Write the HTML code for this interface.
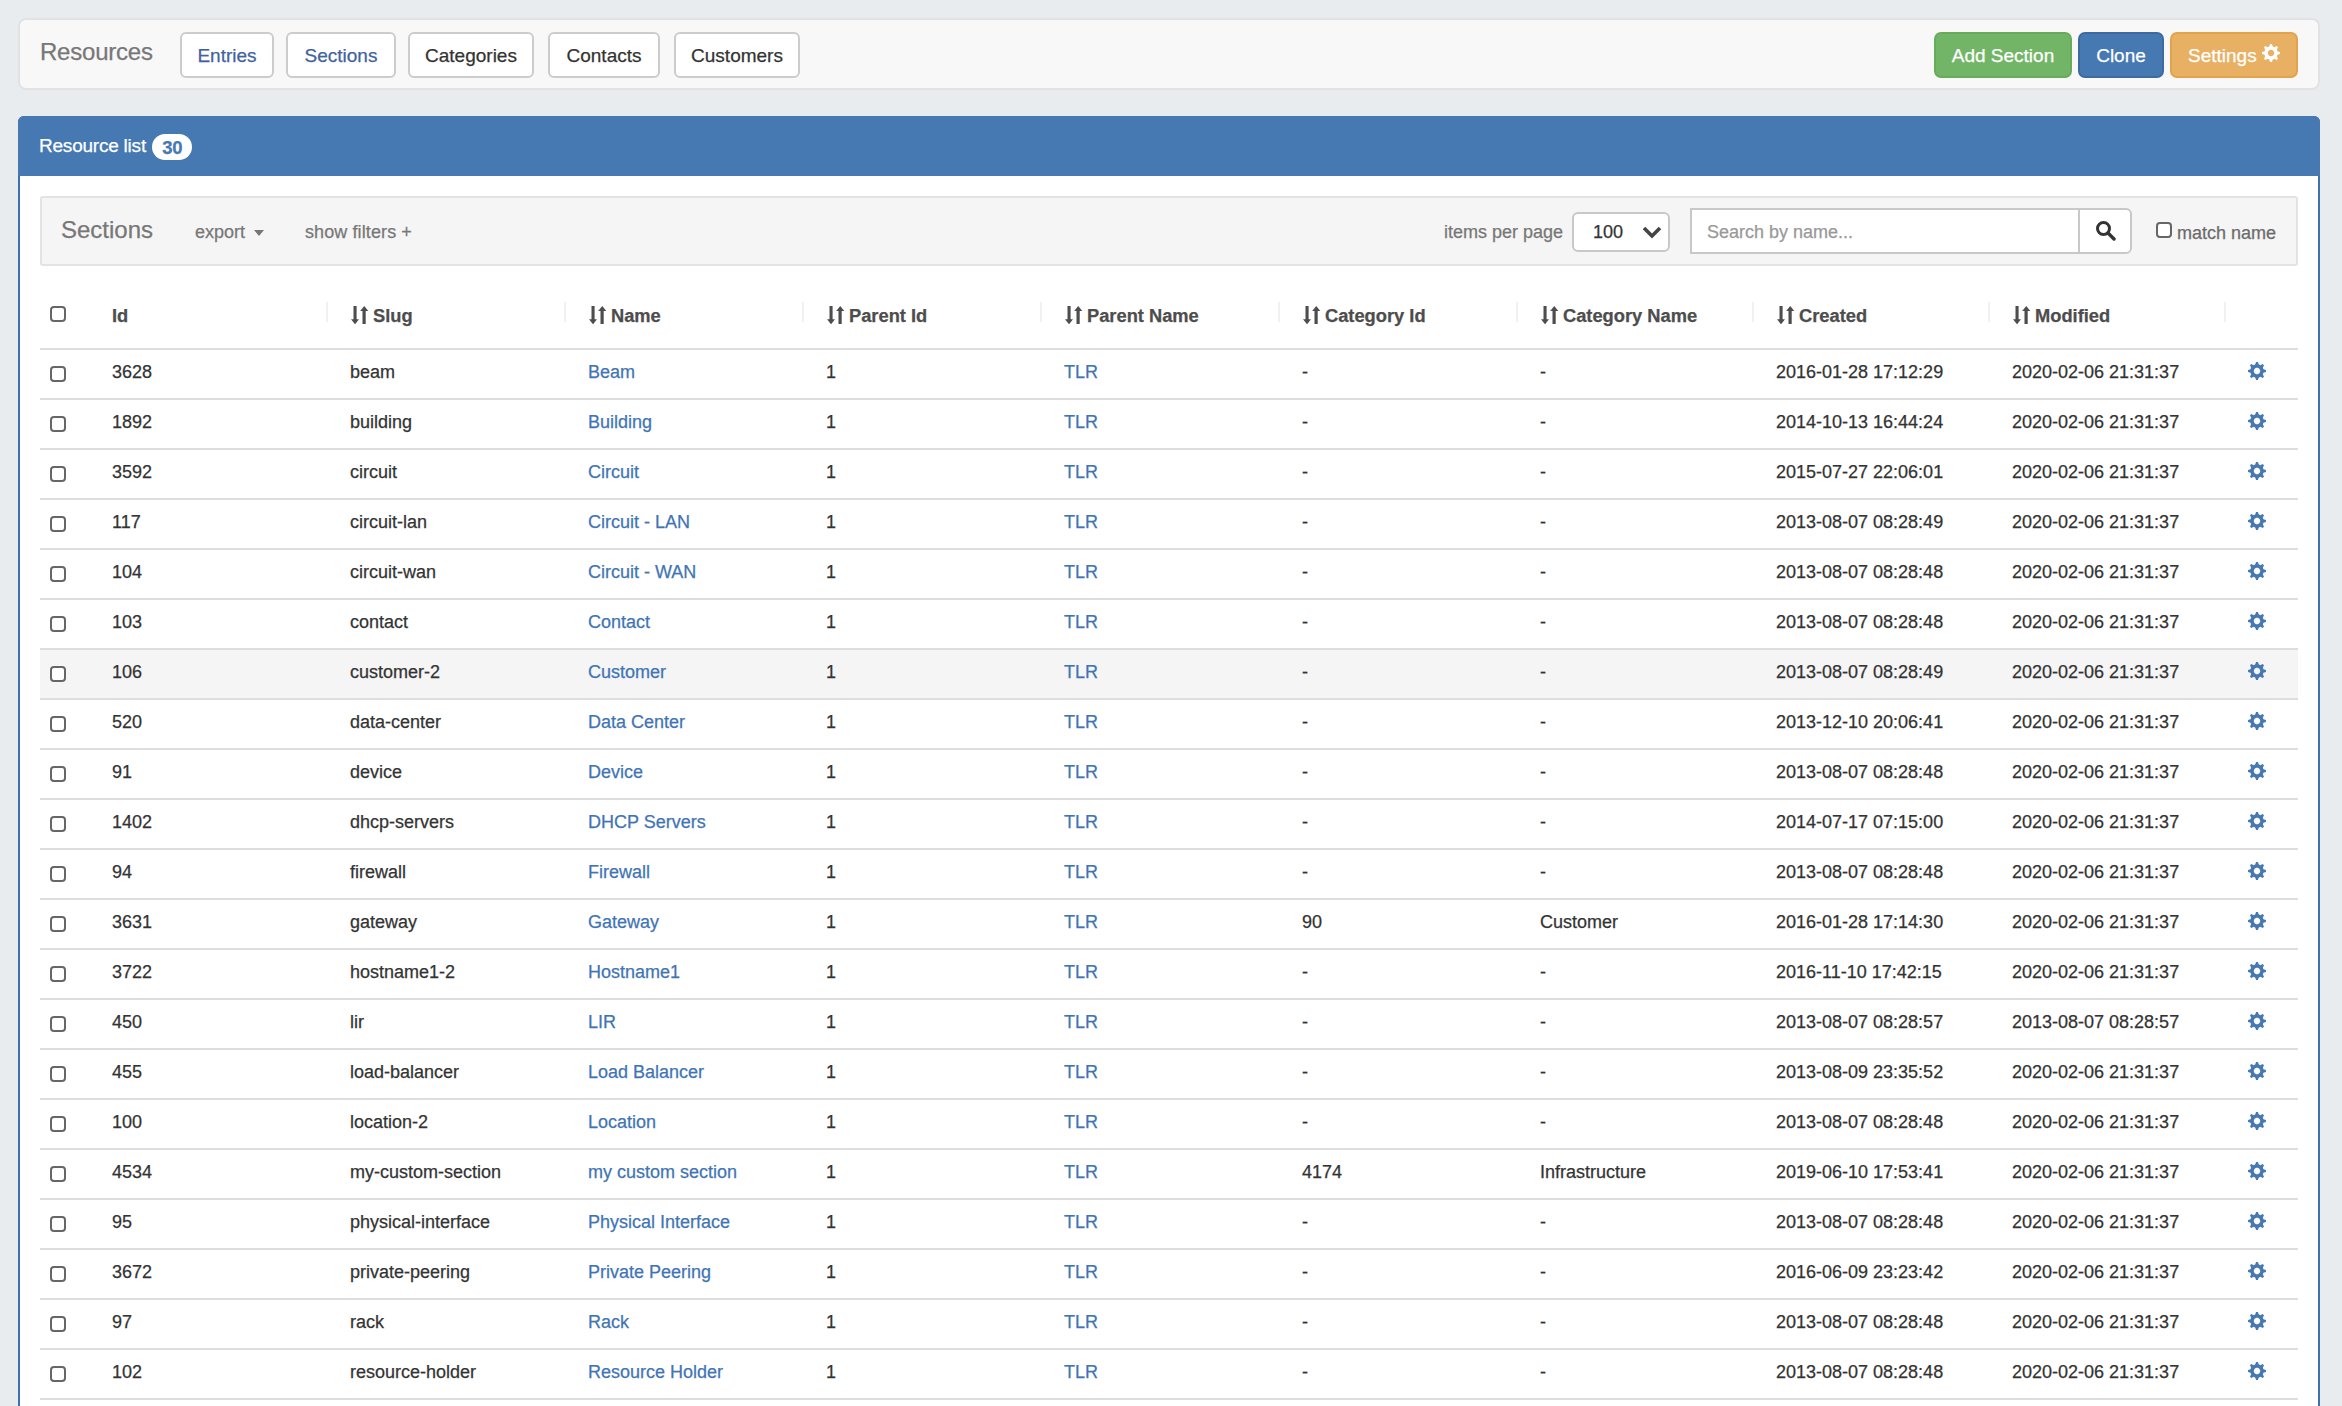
<!DOCTYPE html>
<html><head><meta charset="utf-8"><title>Resources</title>
<style>
*{box-sizing:border-box;margin:0;padding:0}
html,body{width:2342px;height:1406px;overflow:hidden;background:#e9ecef;font-family:"Liberation Sans",sans-serif;color:#333}
body div{-webkit-text-stroke:0.25px currentColor}
.abs{position:absolute}
#nav{position:absolute;left:18px;top:18px;width:2302px;height:72px;background:#f8f8f8;border:2px solid #e2e2e2;border-radius:8px}
.brand{position:absolute;left:40px;top:38px;font-size:24px;line-height:28px;color:#777;white-space:nowrap;letter-spacing:-0.22px}
.nb{position:absolute;top:32px;height:46px;background:#fff;border:2px solid #ccc;border-radius:6px;font-size:19px;line-height:44px;text-align:center;color:#333;white-space:nowrap}
.nb.blue{color:#3f62a0}
.btn{position:absolute;top:32px;height:46px;border:2px solid;border-radius:7px;font-size:19px;line-height:44px;text-align:center;color:#fff;white-space:nowrap}
#panel{position:absolute;left:18px;top:116px;width:2302px;height:1400px;border:2px solid #3d72b2;border-radius:6px;background:#fff}
#ph{position:absolute;left:18px;top:116px;width:2302px;height:60px;background:#4679b2;border-radius:6px 6px 0 0}
.ptitle{position:absolute;left:39px;top:132px;font-size:19px;line-height:28px;color:#fff;white-space:nowrap;letter-spacing:-0.22px}
.badge{position:absolute;left:152px;top:134px;width:40px;height:26px;border-radius:13px;background:#fff;color:#4679b2;font-weight:bold;font-size:18.5px;line-height:28px;text-align:center;letter-spacing:-0.3px;padding-left:0.5px}
#well{position:absolute;left:40px;top:196px;width:2258px;height:70px;background:#f5f5f5;border:2px solid #e3e3e3;border-radius:3px}
.wt{position:absolute;white-space:nowrap;color:#777}
.sel{position:absolute;left:1572px;top:212px;width:98px;height:40px;background:#fff;border:2px solid #c8c8c8;border-radius:6px}
.inp{position:absolute;left:1690px;top:208px;width:390px;height:46px;background:#fff;border:2px solid #c8c8c8;border-right:none}
.sbtn{position:absolute;left:2078px;top:208px;width:54px;height:46px;background:#fff;border:2px solid #c8c8c8;border-radius:0 6px 6px 0}
.cb{position:absolute;width:16px;height:16px;border:2px solid #666;border-radius:4px;background:#fff}
.th{position:absolute;top:302px;font-size:18.3px;line-height:28px;font-weight:bold;color:#4d4d4d;white-space:nowrap}
.sa{position:absolute;left:0.5px;top:3.7px}
.th.s{padding-left:23px}
.sep{position:absolute;top:302px;width:2px;height:20px;background:#f1f1f1}
.hl{position:absolute;left:40px;width:2258px;height:2px;background:#ddd}
.row{position:absolute;left:40px;width:2258px;height:48px}
.td{position:absolute;font-size:18px;line-height:28px;color:#333;white-space:nowrap}
.td a{color:#3f74b5;text-decoration:none}
.gear{position:absolute;left:2248px}
</style></head><body>

<div id="nav"></div>
<div class="brand">Resources</div>
<div class="nb blue" style="left:180px;width:94px">Entries</div>
<div class="nb blue" style="left:286px;width:110px">Sections</div>
<div class="nb" style="left:408px;width:126px">Categories</div>
<div class="nb" style="left:548px;width:112px">Contacts</div>
<div class="nb" style="left:674px;width:126px">Customers</div>
<div class="btn" style="left:1934px;width:138px;background:#73b566;border-color:#68ab5b">Add Section</div>
<div class="btn" style="left:2078px;width:86px;background:#4679b2;border-color:#3d6aa3">Clone</div>
<div class="btn" style="left:2170px;width:128px;background:#e8b062;border-color:#e3a24c;text-align:left;padding-left:16px">Settings <span style="position:absolute;left:90px;top:10px;line-height:0"><svg width="18" height="18" viewBox="0 0 18 18"><path fill-rule="evenodd" d="M7.15 2.56 L8.10 0.04 L9.90 0.04 L10.85 2.56 L11.56 2.81 L12.24 3.14 L14.70 2.03 L15.97 3.30 L14.86 5.76 L15.19 6.44 L15.44 7.15 L17.96 8.10 L17.96 9.90 L15.44 10.85 L15.19 11.56 L14.86 12.24 L15.97 14.70 L14.70 15.97 L12.24 14.86 L11.56 15.19 L10.85 15.44 L9.90 17.96 L8.10 17.96 L7.15 15.44 L6.44 15.19 L5.76 14.86 L3.30 15.97 L2.03 14.70 L3.14 12.24 L2.81 11.56 L2.56 10.85 L0.04 9.90 L0.04 8.10 L2.56 7.15 L2.81 6.44 L3.14 5.76 L2.03 3.30 L3.30 2.03 L5.76 3.14 L6.44 2.81Z M12.20 9.00 L12.15 9.56 L12.01 10.09 L11.77 10.60 L11.45 11.06 L11.06 11.45 L10.60 11.77 L10.09 12.01 L9.56 12.15 L9.00 12.20 L8.44 12.15 L7.91 12.01 L7.40 11.77 L6.94 11.45 L6.55 11.06 L6.23 10.60 L5.99 10.09 L5.85 9.56 L5.80 9.00 L5.85 8.44 L5.99 7.91 L6.23 7.40 L6.55 6.94 L6.94 6.55 L7.40 6.23 L7.91 5.99 L8.44 5.85 L9.00 5.80 L9.56 5.85 L10.09 5.99 L10.60 6.23 L11.06 6.55 L11.45 6.94 L11.77 7.40 L12.01 7.91 L12.15 8.44Z" fill="#fff"/></svg></span></div>
<div id="panel"></div><div id="ph"></div>
<div class="ptitle">Resource list</div><div class="badge">30</div>
<div id="well"></div>
<div class="wt" style="left:61px;top:214px;font-size:24px;line-height:32px">Sections</div>
<div class="wt" style="left:195px;top:218px;font-size:18px;line-height:28px">export</div>
<svg class="abs" style="left:254px;top:230px" width="10" height="6" viewBox="0 0 10 6"><path d="M0 0h10L5 6z" fill="#777"/></svg>
<div class="wt" style="left:305px;top:218px;font-size:18px;line-height:28px;letter-spacing:0.1px">show filters +</div>
<div class="wt" style="left:1444px;top:218px;font-size:18px;line-height:28px">items per page</div>
<div class="sel"></div>
<div class="abs" style="left:1593px;top:218px;font-size:18px;line-height:28px;color:#333">100</div>
<svg class="abs" style="left:1642px;top:226px" width="20" height="13" viewBox="0 0 20 13"><path d="M2 2l8 8 8-8" fill="none" stroke="#444" stroke-width="3.6"/></svg>
<div class="inp"></div><div class="sbtn"></div>
<div class="abs" style="left:1707px;top:218px;font-size:18px;line-height:28px;color:#999;white-space:nowrap">Search by name...</div>
<svg class="abs" style="left:2096px;top:221px" width="20" height="20" viewBox="0 0 20 20"><circle cx="7.5" cy="7.5" r="6" fill="none" stroke="#333" stroke-width="3"/><path d="M12 12l6 6" stroke="#333" stroke-width="3.4" stroke-linecap="round"/></svg>
<div class="cb" style="left:2156px;top:222px"></div>
<div class="wt" style="left:2177px;top:219px;font-size:18px;line-height:28px;color:#6b6b6b">match name</div>
<div class="cb" style="left:50px;top:306px"></div>
<div class="th" style="left:112px">Id</div>
<div class="th s" style="left:350px"><svg class="sa" width="18" height="18" viewBox="0 0 18 18"><path d="M2.5 0h3.1v13.3H8L4.05 18.3 0 13.3h2.5z M13.25 0L17.3 5h-2.6v13.3h-3.2V5H9.2z" fill="#4d4d4d"/></svg>Slug</div>
<div class="th s" style="left:588px"><svg class="sa" width="18" height="18" viewBox="0 0 18 18"><path d="M2.5 0h3.1v13.3H8L4.05 18.3 0 13.3h2.5z M13.25 0L17.3 5h-2.6v13.3h-3.2V5H9.2z" fill="#4d4d4d"/></svg>Name</div>
<div class="th s" style="left:826px"><svg class="sa" width="18" height="18" viewBox="0 0 18 18"><path d="M2.5 0h3.1v13.3H8L4.05 18.3 0 13.3h2.5z M13.25 0L17.3 5h-2.6v13.3h-3.2V5H9.2z" fill="#4d4d4d"/></svg>Parent Id</div>
<div class="th s" style="left:1064px"><svg class="sa" width="18" height="18" viewBox="0 0 18 18"><path d="M2.5 0h3.1v13.3H8L4.05 18.3 0 13.3h2.5z M13.25 0L17.3 5h-2.6v13.3h-3.2V5H9.2z" fill="#4d4d4d"/></svg>Parent Name</div>
<div class="th s" style="left:1302px"><svg class="sa" width="18" height="18" viewBox="0 0 18 18"><path d="M2.5 0h3.1v13.3H8L4.05 18.3 0 13.3h2.5z M13.25 0L17.3 5h-2.6v13.3h-3.2V5H9.2z" fill="#4d4d4d"/></svg>Category Id</div>
<div class="th s" style="left:1540px"><svg class="sa" width="18" height="18" viewBox="0 0 18 18"><path d="M2.5 0h3.1v13.3H8L4.05 18.3 0 13.3h2.5z M13.25 0L17.3 5h-2.6v13.3h-3.2V5H9.2z" fill="#4d4d4d"/></svg>Category Name</div>
<div class="th s" style="left:1776px"><svg class="sa" width="18" height="18" viewBox="0 0 18 18"><path d="M2.5 0h3.1v13.3H8L4.05 18.3 0 13.3h2.5z M13.25 0L17.3 5h-2.6v13.3h-3.2V5H9.2z" fill="#4d4d4d"/></svg>Created</div>
<div class="th s" style="left:2012px"><svg class="sa" width="18" height="18" viewBox="0 0 18 18"><path d="M2.5 0h3.1v13.3H8L4.05 18.3 0 13.3h2.5z M13.25 0L17.3 5h-2.6v13.3h-3.2V5H9.2z" fill="#4d4d4d"/></svg>Modified</div>
<div class="sep" style="left:326px"></div>
<div class="sep" style="left:564px"></div>
<div class="sep" style="left:802px"></div>
<div class="sep" style="left:1040px"></div>
<div class="sep" style="left:1278px"></div>
<div class="sep" style="left:1516px"></div>
<div class="sep" style="left:1752px"></div>
<div class="sep" style="left:1988px"></div>
<div class="sep" style="left:2224px"></div>
<div class="hl" style="top:348px"></div>
<div class="cb" style="left:50px;top:366px"></div>
<div class="td" style="left:112px;top:358px">3628</div>
<div class="td" style="left:350px;top:358px">beam</div>
<div class="td" style="left:588px;top:358px"><a>Beam</a></div>
<div class="td" style="left:826px;top:358px">1</div>
<div class="td" style="left:1064px;top:358px"><a>TLR</a></div>
<div class="td" style="left:1302px;top:358px">-</div>
<div class="td" style="left:1540px;top:358px">-</div>
<div class="td" style="left:1776px;top:358px">2016-01-28 17:12:29</div>
<div class="td" style="left:2012px;top:358px">2020-02-06 21:31:37</div>
<div class="gear" style="top:362px"><svg width="18" height="18" viewBox="0 0 18 18"><path fill-rule="evenodd" d="M7.15 2.56 L8.10 0.04 L9.90 0.04 L10.85 2.56 L11.56 2.81 L12.24 3.14 L14.70 2.03 L15.97 3.30 L14.86 5.76 L15.19 6.44 L15.44 7.15 L17.96 8.10 L17.96 9.90 L15.44 10.85 L15.19 11.56 L14.86 12.24 L15.97 14.70 L14.70 15.97 L12.24 14.86 L11.56 15.19 L10.85 15.44 L9.90 17.96 L8.10 17.96 L7.15 15.44 L6.44 15.19 L5.76 14.86 L3.30 15.97 L2.03 14.70 L3.14 12.24 L2.81 11.56 L2.56 10.85 L0.04 9.90 L0.04 8.10 L2.56 7.15 L2.81 6.44 L3.14 5.76 L2.03 3.30 L3.30 2.03 L5.76 3.14 L6.44 2.81Z M12.20 9.00 L12.15 9.56 L12.01 10.09 L11.77 10.60 L11.45 11.06 L11.06 11.45 L10.60 11.77 L10.09 12.01 L9.56 12.15 L9.00 12.20 L8.44 12.15 L7.91 12.01 L7.40 11.77 L6.94 11.45 L6.55 11.06 L6.23 10.60 L5.99 10.09 L5.85 9.56 L5.80 9.00 L5.85 8.44 L5.99 7.91 L6.23 7.40 L6.55 6.94 L6.94 6.55 L7.40 6.23 L7.91 5.99 L8.44 5.85 L9.00 5.80 L9.56 5.85 L10.09 5.99 L10.60 6.23 L11.06 6.55 L11.45 6.94 L11.77 7.40 L12.01 7.91 L12.15 8.44Z" fill="#4679b2"/></svg></div>
<div class="hl" style="top:398px"></div>
<div class="cb" style="left:50px;top:416px"></div>
<div class="td" style="left:112px;top:408px">1892</div>
<div class="td" style="left:350px;top:408px">building</div>
<div class="td" style="left:588px;top:408px"><a>Building</a></div>
<div class="td" style="left:826px;top:408px">1</div>
<div class="td" style="left:1064px;top:408px"><a>TLR</a></div>
<div class="td" style="left:1302px;top:408px">-</div>
<div class="td" style="left:1540px;top:408px">-</div>
<div class="td" style="left:1776px;top:408px">2014-10-13 16:44:24</div>
<div class="td" style="left:2012px;top:408px">2020-02-06 21:31:37</div>
<div class="gear" style="top:412px"><svg width="18" height="18" viewBox="0 0 18 18"><path fill-rule="evenodd" d="M7.15 2.56 L8.10 0.04 L9.90 0.04 L10.85 2.56 L11.56 2.81 L12.24 3.14 L14.70 2.03 L15.97 3.30 L14.86 5.76 L15.19 6.44 L15.44 7.15 L17.96 8.10 L17.96 9.90 L15.44 10.85 L15.19 11.56 L14.86 12.24 L15.97 14.70 L14.70 15.97 L12.24 14.86 L11.56 15.19 L10.85 15.44 L9.90 17.96 L8.10 17.96 L7.15 15.44 L6.44 15.19 L5.76 14.86 L3.30 15.97 L2.03 14.70 L3.14 12.24 L2.81 11.56 L2.56 10.85 L0.04 9.90 L0.04 8.10 L2.56 7.15 L2.81 6.44 L3.14 5.76 L2.03 3.30 L3.30 2.03 L5.76 3.14 L6.44 2.81Z M12.20 9.00 L12.15 9.56 L12.01 10.09 L11.77 10.60 L11.45 11.06 L11.06 11.45 L10.60 11.77 L10.09 12.01 L9.56 12.15 L9.00 12.20 L8.44 12.15 L7.91 12.01 L7.40 11.77 L6.94 11.45 L6.55 11.06 L6.23 10.60 L5.99 10.09 L5.85 9.56 L5.80 9.00 L5.85 8.44 L5.99 7.91 L6.23 7.40 L6.55 6.94 L6.94 6.55 L7.40 6.23 L7.91 5.99 L8.44 5.85 L9.00 5.80 L9.56 5.85 L10.09 5.99 L10.60 6.23 L11.06 6.55 L11.45 6.94 L11.77 7.40 L12.01 7.91 L12.15 8.44Z" fill="#4679b2"/></svg></div>
<div class="hl" style="top:448px"></div>
<div class="cb" style="left:50px;top:466px"></div>
<div class="td" style="left:112px;top:458px">3592</div>
<div class="td" style="left:350px;top:458px">circuit</div>
<div class="td" style="left:588px;top:458px"><a>Circuit</a></div>
<div class="td" style="left:826px;top:458px">1</div>
<div class="td" style="left:1064px;top:458px"><a>TLR</a></div>
<div class="td" style="left:1302px;top:458px">-</div>
<div class="td" style="left:1540px;top:458px">-</div>
<div class="td" style="left:1776px;top:458px">2015-07-27 22:06:01</div>
<div class="td" style="left:2012px;top:458px">2020-02-06 21:31:37</div>
<div class="gear" style="top:462px"><svg width="18" height="18" viewBox="0 0 18 18"><path fill-rule="evenodd" d="M7.15 2.56 L8.10 0.04 L9.90 0.04 L10.85 2.56 L11.56 2.81 L12.24 3.14 L14.70 2.03 L15.97 3.30 L14.86 5.76 L15.19 6.44 L15.44 7.15 L17.96 8.10 L17.96 9.90 L15.44 10.85 L15.19 11.56 L14.86 12.24 L15.97 14.70 L14.70 15.97 L12.24 14.86 L11.56 15.19 L10.85 15.44 L9.90 17.96 L8.10 17.96 L7.15 15.44 L6.44 15.19 L5.76 14.86 L3.30 15.97 L2.03 14.70 L3.14 12.24 L2.81 11.56 L2.56 10.85 L0.04 9.90 L0.04 8.10 L2.56 7.15 L2.81 6.44 L3.14 5.76 L2.03 3.30 L3.30 2.03 L5.76 3.14 L6.44 2.81Z M12.20 9.00 L12.15 9.56 L12.01 10.09 L11.77 10.60 L11.45 11.06 L11.06 11.45 L10.60 11.77 L10.09 12.01 L9.56 12.15 L9.00 12.20 L8.44 12.15 L7.91 12.01 L7.40 11.77 L6.94 11.45 L6.55 11.06 L6.23 10.60 L5.99 10.09 L5.85 9.56 L5.80 9.00 L5.85 8.44 L5.99 7.91 L6.23 7.40 L6.55 6.94 L6.94 6.55 L7.40 6.23 L7.91 5.99 L8.44 5.85 L9.00 5.80 L9.56 5.85 L10.09 5.99 L10.60 6.23 L11.06 6.55 L11.45 6.94 L11.77 7.40 L12.01 7.91 L12.15 8.44Z" fill="#4679b2"/></svg></div>
<div class="hl" style="top:498px"></div>
<div class="cb" style="left:50px;top:516px"></div>
<div class="td" style="left:112px;top:508px">117</div>
<div class="td" style="left:350px;top:508px">circuit-lan</div>
<div class="td" style="left:588px;top:508px"><a>Circuit - LAN</a></div>
<div class="td" style="left:826px;top:508px">1</div>
<div class="td" style="left:1064px;top:508px"><a>TLR</a></div>
<div class="td" style="left:1302px;top:508px">-</div>
<div class="td" style="left:1540px;top:508px">-</div>
<div class="td" style="left:1776px;top:508px">2013-08-07 08:28:49</div>
<div class="td" style="left:2012px;top:508px">2020-02-06 21:31:37</div>
<div class="gear" style="top:512px"><svg width="18" height="18" viewBox="0 0 18 18"><path fill-rule="evenodd" d="M7.15 2.56 L8.10 0.04 L9.90 0.04 L10.85 2.56 L11.56 2.81 L12.24 3.14 L14.70 2.03 L15.97 3.30 L14.86 5.76 L15.19 6.44 L15.44 7.15 L17.96 8.10 L17.96 9.90 L15.44 10.85 L15.19 11.56 L14.86 12.24 L15.97 14.70 L14.70 15.97 L12.24 14.86 L11.56 15.19 L10.85 15.44 L9.90 17.96 L8.10 17.96 L7.15 15.44 L6.44 15.19 L5.76 14.86 L3.30 15.97 L2.03 14.70 L3.14 12.24 L2.81 11.56 L2.56 10.85 L0.04 9.90 L0.04 8.10 L2.56 7.15 L2.81 6.44 L3.14 5.76 L2.03 3.30 L3.30 2.03 L5.76 3.14 L6.44 2.81Z M12.20 9.00 L12.15 9.56 L12.01 10.09 L11.77 10.60 L11.45 11.06 L11.06 11.45 L10.60 11.77 L10.09 12.01 L9.56 12.15 L9.00 12.20 L8.44 12.15 L7.91 12.01 L7.40 11.77 L6.94 11.45 L6.55 11.06 L6.23 10.60 L5.99 10.09 L5.85 9.56 L5.80 9.00 L5.85 8.44 L5.99 7.91 L6.23 7.40 L6.55 6.94 L6.94 6.55 L7.40 6.23 L7.91 5.99 L8.44 5.85 L9.00 5.80 L9.56 5.85 L10.09 5.99 L10.60 6.23 L11.06 6.55 L11.45 6.94 L11.77 7.40 L12.01 7.91 L12.15 8.44Z" fill="#4679b2"/></svg></div>
<div class="hl" style="top:548px"></div>
<div class="cb" style="left:50px;top:566px"></div>
<div class="td" style="left:112px;top:558px">104</div>
<div class="td" style="left:350px;top:558px">circuit-wan</div>
<div class="td" style="left:588px;top:558px"><a>Circuit - WAN</a></div>
<div class="td" style="left:826px;top:558px">1</div>
<div class="td" style="left:1064px;top:558px"><a>TLR</a></div>
<div class="td" style="left:1302px;top:558px">-</div>
<div class="td" style="left:1540px;top:558px">-</div>
<div class="td" style="left:1776px;top:558px">2013-08-07 08:28:48</div>
<div class="td" style="left:2012px;top:558px">2020-02-06 21:31:37</div>
<div class="gear" style="top:562px"><svg width="18" height="18" viewBox="0 0 18 18"><path fill-rule="evenodd" d="M7.15 2.56 L8.10 0.04 L9.90 0.04 L10.85 2.56 L11.56 2.81 L12.24 3.14 L14.70 2.03 L15.97 3.30 L14.86 5.76 L15.19 6.44 L15.44 7.15 L17.96 8.10 L17.96 9.90 L15.44 10.85 L15.19 11.56 L14.86 12.24 L15.97 14.70 L14.70 15.97 L12.24 14.86 L11.56 15.19 L10.85 15.44 L9.90 17.96 L8.10 17.96 L7.15 15.44 L6.44 15.19 L5.76 14.86 L3.30 15.97 L2.03 14.70 L3.14 12.24 L2.81 11.56 L2.56 10.85 L0.04 9.90 L0.04 8.10 L2.56 7.15 L2.81 6.44 L3.14 5.76 L2.03 3.30 L3.30 2.03 L5.76 3.14 L6.44 2.81Z M12.20 9.00 L12.15 9.56 L12.01 10.09 L11.77 10.60 L11.45 11.06 L11.06 11.45 L10.60 11.77 L10.09 12.01 L9.56 12.15 L9.00 12.20 L8.44 12.15 L7.91 12.01 L7.40 11.77 L6.94 11.45 L6.55 11.06 L6.23 10.60 L5.99 10.09 L5.85 9.56 L5.80 9.00 L5.85 8.44 L5.99 7.91 L6.23 7.40 L6.55 6.94 L6.94 6.55 L7.40 6.23 L7.91 5.99 L8.44 5.85 L9.00 5.80 L9.56 5.85 L10.09 5.99 L10.60 6.23 L11.06 6.55 L11.45 6.94 L11.77 7.40 L12.01 7.91 L12.15 8.44Z" fill="#4679b2"/></svg></div>
<div class="hl" style="top:598px"></div>
<div class="cb" style="left:50px;top:616px"></div>
<div class="td" style="left:112px;top:608px">103</div>
<div class="td" style="left:350px;top:608px">contact</div>
<div class="td" style="left:588px;top:608px"><a>Contact</a></div>
<div class="td" style="left:826px;top:608px">1</div>
<div class="td" style="left:1064px;top:608px"><a>TLR</a></div>
<div class="td" style="left:1302px;top:608px">-</div>
<div class="td" style="left:1540px;top:608px">-</div>
<div class="td" style="left:1776px;top:608px">2013-08-07 08:28:48</div>
<div class="td" style="left:2012px;top:608px">2020-02-06 21:31:37</div>
<div class="gear" style="top:612px"><svg width="18" height="18" viewBox="0 0 18 18"><path fill-rule="evenodd" d="M7.15 2.56 L8.10 0.04 L9.90 0.04 L10.85 2.56 L11.56 2.81 L12.24 3.14 L14.70 2.03 L15.97 3.30 L14.86 5.76 L15.19 6.44 L15.44 7.15 L17.96 8.10 L17.96 9.90 L15.44 10.85 L15.19 11.56 L14.86 12.24 L15.97 14.70 L14.70 15.97 L12.24 14.86 L11.56 15.19 L10.85 15.44 L9.90 17.96 L8.10 17.96 L7.15 15.44 L6.44 15.19 L5.76 14.86 L3.30 15.97 L2.03 14.70 L3.14 12.24 L2.81 11.56 L2.56 10.85 L0.04 9.90 L0.04 8.10 L2.56 7.15 L2.81 6.44 L3.14 5.76 L2.03 3.30 L3.30 2.03 L5.76 3.14 L6.44 2.81Z M12.20 9.00 L12.15 9.56 L12.01 10.09 L11.77 10.60 L11.45 11.06 L11.06 11.45 L10.60 11.77 L10.09 12.01 L9.56 12.15 L9.00 12.20 L8.44 12.15 L7.91 12.01 L7.40 11.77 L6.94 11.45 L6.55 11.06 L6.23 10.60 L5.99 10.09 L5.85 9.56 L5.80 9.00 L5.85 8.44 L5.99 7.91 L6.23 7.40 L6.55 6.94 L6.94 6.55 L7.40 6.23 L7.91 5.99 L8.44 5.85 L9.00 5.80 L9.56 5.85 L10.09 5.99 L10.60 6.23 L11.06 6.55 L11.45 6.94 L11.77 7.40 L12.01 7.91 L12.15 8.44Z" fill="#4679b2"/></svg></div>
<div class="hl" style="top:648px"></div>
<div class="row" style="top:650px;background:#f5f5f5"></div>
<div class="cb" style="left:50px;top:666px"></div>
<div class="td" style="left:112px;top:658px">106</div>
<div class="td" style="left:350px;top:658px">customer-2</div>
<div class="td" style="left:588px;top:658px"><a>Customer</a></div>
<div class="td" style="left:826px;top:658px">1</div>
<div class="td" style="left:1064px;top:658px"><a>TLR</a></div>
<div class="td" style="left:1302px;top:658px">-</div>
<div class="td" style="left:1540px;top:658px">-</div>
<div class="td" style="left:1776px;top:658px">2013-08-07 08:28:49</div>
<div class="td" style="left:2012px;top:658px">2020-02-06 21:31:37</div>
<div class="gear" style="top:662px"><svg width="18" height="18" viewBox="0 0 18 18"><path fill-rule="evenodd" d="M7.15 2.56 L8.10 0.04 L9.90 0.04 L10.85 2.56 L11.56 2.81 L12.24 3.14 L14.70 2.03 L15.97 3.30 L14.86 5.76 L15.19 6.44 L15.44 7.15 L17.96 8.10 L17.96 9.90 L15.44 10.85 L15.19 11.56 L14.86 12.24 L15.97 14.70 L14.70 15.97 L12.24 14.86 L11.56 15.19 L10.85 15.44 L9.90 17.96 L8.10 17.96 L7.15 15.44 L6.44 15.19 L5.76 14.86 L3.30 15.97 L2.03 14.70 L3.14 12.24 L2.81 11.56 L2.56 10.85 L0.04 9.90 L0.04 8.10 L2.56 7.15 L2.81 6.44 L3.14 5.76 L2.03 3.30 L3.30 2.03 L5.76 3.14 L6.44 2.81Z M12.20 9.00 L12.15 9.56 L12.01 10.09 L11.77 10.60 L11.45 11.06 L11.06 11.45 L10.60 11.77 L10.09 12.01 L9.56 12.15 L9.00 12.20 L8.44 12.15 L7.91 12.01 L7.40 11.77 L6.94 11.45 L6.55 11.06 L6.23 10.60 L5.99 10.09 L5.85 9.56 L5.80 9.00 L5.85 8.44 L5.99 7.91 L6.23 7.40 L6.55 6.94 L6.94 6.55 L7.40 6.23 L7.91 5.99 L8.44 5.85 L9.00 5.80 L9.56 5.85 L10.09 5.99 L10.60 6.23 L11.06 6.55 L11.45 6.94 L11.77 7.40 L12.01 7.91 L12.15 8.44Z" fill="#4679b2"/></svg></div>
<div class="hl" style="top:698px"></div>
<div class="cb" style="left:50px;top:716px"></div>
<div class="td" style="left:112px;top:708px">520</div>
<div class="td" style="left:350px;top:708px">data-center</div>
<div class="td" style="left:588px;top:708px"><a>Data Center</a></div>
<div class="td" style="left:826px;top:708px">1</div>
<div class="td" style="left:1064px;top:708px"><a>TLR</a></div>
<div class="td" style="left:1302px;top:708px">-</div>
<div class="td" style="left:1540px;top:708px">-</div>
<div class="td" style="left:1776px;top:708px">2013-12-10 20:06:41</div>
<div class="td" style="left:2012px;top:708px">2020-02-06 21:31:37</div>
<div class="gear" style="top:712px"><svg width="18" height="18" viewBox="0 0 18 18"><path fill-rule="evenodd" d="M7.15 2.56 L8.10 0.04 L9.90 0.04 L10.85 2.56 L11.56 2.81 L12.24 3.14 L14.70 2.03 L15.97 3.30 L14.86 5.76 L15.19 6.44 L15.44 7.15 L17.96 8.10 L17.96 9.90 L15.44 10.85 L15.19 11.56 L14.86 12.24 L15.97 14.70 L14.70 15.97 L12.24 14.86 L11.56 15.19 L10.85 15.44 L9.90 17.96 L8.10 17.96 L7.15 15.44 L6.44 15.19 L5.76 14.86 L3.30 15.97 L2.03 14.70 L3.14 12.24 L2.81 11.56 L2.56 10.85 L0.04 9.90 L0.04 8.10 L2.56 7.15 L2.81 6.44 L3.14 5.76 L2.03 3.30 L3.30 2.03 L5.76 3.14 L6.44 2.81Z M12.20 9.00 L12.15 9.56 L12.01 10.09 L11.77 10.60 L11.45 11.06 L11.06 11.45 L10.60 11.77 L10.09 12.01 L9.56 12.15 L9.00 12.20 L8.44 12.15 L7.91 12.01 L7.40 11.77 L6.94 11.45 L6.55 11.06 L6.23 10.60 L5.99 10.09 L5.85 9.56 L5.80 9.00 L5.85 8.44 L5.99 7.91 L6.23 7.40 L6.55 6.94 L6.94 6.55 L7.40 6.23 L7.91 5.99 L8.44 5.85 L9.00 5.80 L9.56 5.85 L10.09 5.99 L10.60 6.23 L11.06 6.55 L11.45 6.94 L11.77 7.40 L12.01 7.91 L12.15 8.44Z" fill="#4679b2"/></svg></div>
<div class="hl" style="top:748px"></div>
<div class="cb" style="left:50px;top:766px"></div>
<div class="td" style="left:112px;top:758px">91</div>
<div class="td" style="left:350px;top:758px">device</div>
<div class="td" style="left:588px;top:758px"><a>Device</a></div>
<div class="td" style="left:826px;top:758px">1</div>
<div class="td" style="left:1064px;top:758px"><a>TLR</a></div>
<div class="td" style="left:1302px;top:758px">-</div>
<div class="td" style="left:1540px;top:758px">-</div>
<div class="td" style="left:1776px;top:758px">2013-08-07 08:28:48</div>
<div class="td" style="left:2012px;top:758px">2020-02-06 21:31:37</div>
<div class="gear" style="top:762px"><svg width="18" height="18" viewBox="0 0 18 18"><path fill-rule="evenodd" d="M7.15 2.56 L8.10 0.04 L9.90 0.04 L10.85 2.56 L11.56 2.81 L12.24 3.14 L14.70 2.03 L15.97 3.30 L14.86 5.76 L15.19 6.44 L15.44 7.15 L17.96 8.10 L17.96 9.90 L15.44 10.85 L15.19 11.56 L14.86 12.24 L15.97 14.70 L14.70 15.97 L12.24 14.86 L11.56 15.19 L10.85 15.44 L9.90 17.96 L8.10 17.96 L7.15 15.44 L6.44 15.19 L5.76 14.86 L3.30 15.97 L2.03 14.70 L3.14 12.24 L2.81 11.56 L2.56 10.85 L0.04 9.90 L0.04 8.10 L2.56 7.15 L2.81 6.44 L3.14 5.76 L2.03 3.30 L3.30 2.03 L5.76 3.14 L6.44 2.81Z M12.20 9.00 L12.15 9.56 L12.01 10.09 L11.77 10.60 L11.45 11.06 L11.06 11.45 L10.60 11.77 L10.09 12.01 L9.56 12.15 L9.00 12.20 L8.44 12.15 L7.91 12.01 L7.40 11.77 L6.94 11.45 L6.55 11.06 L6.23 10.60 L5.99 10.09 L5.85 9.56 L5.80 9.00 L5.85 8.44 L5.99 7.91 L6.23 7.40 L6.55 6.94 L6.94 6.55 L7.40 6.23 L7.91 5.99 L8.44 5.85 L9.00 5.80 L9.56 5.85 L10.09 5.99 L10.60 6.23 L11.06 6.55 L11.45 6.94 L11.77 7.40 L12.01 7.91 L12.15 8.44Z" fill="#4679b2"/></svg></div>
<div class="hl" style="top:798px"></div>
<div class="cb" style="left:50px;top:816px"></div>
<div class="td" style="left:112px;top:808px">1402</div>
<div class="td" style="left:350px;top:808px">dhcp-servers</div>
<div class="td" style="left:588px;top:808px"><a>DHCP Servers</a></div>
<div class="td" style="left:826px;top:808px">1</div>
<div class="td" style="left:1064px;top:808px"><a>TLR</a></div>
<div class="td" style="left:1302px;top:808px">-</div>
<div class="td" style="left:1540px;top:808px">-</div>
<div class="td" style="left:1776px;top:808px">2014-07-17 07:15:00</div>
<div class="td" style="left:2012px;top:808px">2020-02-06 21:31:37</div>
<div class="gear" style="top:812px"><svg width="18" height="18" viewBox="0 0 18 18"><path fill-rule="evenodd" d="M7.15 2.56 L8.10 0.04 L9.90 0.04 L10.85 2.56 L11.56 2.81 L12.24 3.14 L14.70 2.03 L15.97 3.30 L14.86 5.76 L15.19 6.44 L15.44 7.15 L17.96 8.10 L17.96 9.90 L15.44 10.85 L15.19 11.56 L14.86 12.24 L15.97 14.70 L14.70 15.97 L12.24 14.86 L11.56 15.19 L10.85 15.44 L9.90 17.96 L8.10 17.96 L7.15 15.44 L6.44 15.19 L5.76 14.86 L3.30 15.97 L2.03 14.70 L3.14 12.24 L2.81 11.56 L2.56 10.85 L0.04 9.90 L0.04 8.10 L2.56 7.15 L2.81 6.44 L3.14 5.76 L2.03 3.30 L3.30 2.03 L5.76 3.14 L6.44 2.81Z M12.20 9.00 L12.15 9.56 L12.01 10.09 L11.77 10.60 L11.45 11.06 L11.06 11.45 L10.60 11.77 L10.09 12.01 L9.56 12.15 L9.00 12.20 L8.44 12.15 L7.91 12.01 L7.40 11.77 L6.94 11.45 L6.55 11.06 L6.23 10.60 L5.99 10.09 L5.85 9.56 L5.80 9.00 L5.85 8.44 L5.99 7.91 L6.23 7.40 L6.55 6.94 L6.94 6.55 L7.40 6.23 L7.91 5.99 L8.44 5.85 L9.00 5.80 L9.56 5.85 L10.09 5.99 L10.60 6.23 L11.06 6.55 L11.45 6.94 L11.77 7.40 L12.01 7.91 L12.15 8.44Z" fill="#4679b2"/></svg></div>
<div class="hl" style="top:848px"></div>
<div class="cb" style="left:50px;top:866px"></div>
<div class="td" style="left:112px;top:858px">94</div>
<div class="td" style="left:350px;top:858px">firewall</div>
<div class="td" style="left:588px;top:858px"><a>Firewall</a></div>
<div class="td" style="left:826px;top:858px">1</div>
<div class="td" style="left:1064px;top:858px"><a>TLR</a></div>
<div class="td" style="left:1302px;top:858px">-</div>
<div class="td" style="left:1540px;top:858px">-</div>
<div class="td" style="left:1776px;top:858px">2013-08-07 08:28:48</div>
<div class="td" style="left:2012px;top:858px">2020-02-06 21:31:37</div>
<div class="gear" style="top:862px"><svg width="18" height="18" viewBox="0 0 18 18"><path fill-rule="evenodd" d="M7.15 2.56 L8.10 0.04 L9.90 0.04 L10.85 2.56 L11.56 2.81 L12.24 3.14 L14.70 2.03 L15.97 3.30 L14.86 5.76 L15.19 6.44 L15.44 7.15 L17.96 8.10 L17.96 9.90 L15.44 10.85 L15.19 11.56 L14.86 12.24 L15.97 14.70 L14.70 15.97 L12.24 14.86 L11.56 15.19 L10.85 15.44 L9.90 17.96 L8.10 17.96 L7.15 15.44 L6.44 15.19 L5.76 14.86 L3.30 15.97 L2.03 14.70 L3.14 12.24 L2.81 11.56 L2.56 10.85 L0.04 9.90 L0.04 8.10 L2.56 7.15 L2.81 6.44 L3.14 5.76 L2.03 3.30 L3.30 2.03 L5.76 3.14 L6.44 2.81Z M12.20 9.00 L12.15 9.56 L12.01 10.09 L11.77 10.60 L11.45 11.06 L11.06 11.45 L10.60 11.77 L10.09 12.01 L9.56 12.15 L9.00 12.20 L8.44 12.15 L7.91 12.01 L7.40 11.77 L6.94 11.45 L6.55 11.06 L6.23 10.60 L5.99 10.09 L5.85 9.56 L5.80 9.00 L5.85 8.44 L5.99 7.91 L6.23 7.40 L6.55 6.94 L6.94 6.55 L7.40 6.23 L7.91 5.99 L8.44 5.85 L9.00 5.80 L9.56 5.85 L10.09 5.99 L10.60 6.23 L11.06 6.55 L11.45 6.94 L11.77 7.40 L12.01 7.91 L12.15 8.44Z" fill="#4679b2"/></svg></div>
<div class="hl" style="top:898px"></div>
<div class="cb" style="left:50px;top:916px"></div>
<div class="td" style="left:112px;top:908px">3631</div>
<div class="td" style="left:350px;top:908px">gateway</div>
<div class="td" style="left:588px;top:908px"><a>Gateway</a></div>
<div class="td" style="left:826px;top:908px">1</div>
<div class="td" style="left:1064px;top:908px"><a>TLR</a></div>
<div class="td" style="left:1302px;top:908px">90</div>
<div class="td" style="left:1540px;top:908px">Customer</div>
<div class="td" style="left:1776px;top:908px">2016-01-28 17:14:30</div>
<div class="td" style="left:2012px;top:908px">2020-02-06 21:31:37</div>
<div class="gear" style="top:912px"><svg width="18" height="18" viewBox="0 0 18 18"><path fill-rule="evenodd" d="M7.15 2.56 L8.10 0.04 L9.90 0.04 L10.85 2.56 L11.56 2.81 L12.24 3.14 L14.70 2.03 L15.97 3.30 L14.86 5.76 L15.19 6.44 L15.44 7.15 L17.96 8.10 L17.96 9.90 L15.44 10.85 L15.19 11.56 L14.86 12.24 L15.97 14.70 L14.70 15.97 L12.24 14.86 L11.56 15.19 L10.85 15.44 L9.90 17.96 L8.10 17.96 L7.15 15.44 L6.44 15.19 L5.76 14.86 L3.30 15.97 L2.03 14.70 L3.14 12.24 L2.81 11.56 L2.56 10.85 L0.04 9.90 L0.04 8.10 L2.56 7.15 L2.81 6.44 L3.14 5.76 L2.03 3.30 L3.30 2.03 L5.76 3.14 L6.44 2.81Z M12.20 9.00 L12.15 9.56 L12.01 10.09 L11.77 10.60 L11.45 11.06 L11.06 11.45 L10.60 11.77 L10.09 12.01 L9.56 12.15 L9.00 12.20 L8.44 12.15 L7.91 12.01 L7.40 11.77 L6.94 11.45 L6.55 11.06 L6.23 10.60 L5.99 10.09 L5.85 9.56 L5.80 9.00 L5.85 8.44 L5.99 7.91 L6.23 7.40 L6.55 6.94 L6.94 6.55 L7.40 6.23 L7.91 5.99 L8.44 5.85 L9.00 5.80 L9.56 5.85 L10.09 5.99 L10.60 6.23 L11.06 6.55 L11.45 6.94 L11.77 7.40 L12.01 7.91 L12.15 8.44Z" fill="#4679b2"/></svg></div>
<div class="hl" style="top:948px"></div>
<div class="cb" style="left:50px;top:966px"></div>
<div class="td" style="left:112px;top:958px">3722</div>
<div class="td" style="left:350px;top:958px">hostname1-2</div>
<div class="td" style="left:588px;top:958px"><a>Hostname1</a></div>
<div class="td" style="left:826px;top:958px">1</div>
<div class="td" style="left:1064px;top:958px"><a>TLR</a></div>
<div class="td" style="left:1302px;top:958px">-</div>
<div class="td" style="left:1540px;top:958px">-</div>
<div class="td" style="left:1776px;top:958px">2016-11-10 17:42:15</div>
<div class="td" style="left:2012px;top:958px">2020-02-06 21:31:37</div>
<div class="gear" style="top:962px"><svg width="18" height="18" viewBox="0 0 18 18"><path fill-rule="evenodd" d="M7.15 2.56 L8.10 0.04 L9.90 0.04 L10.85 2.56 L11.56 2.81 L12.24 3.14 L14.70 2.03 L15.97 3.30 L14.86 5.76 L15.19 6.44 L15.44 7.15 L17.96 8.10 L17.96 9.90 L15.44 10.85 L15.19 11.56 L14.86 12.24 L15.97 14.70 L14.70 15.97 L12.24 14.86 L11.56 15.19 L10.85 15.44 L9.90 17.96 L8.10 17.96 L7.15 15.44 L6.44 15.19 L5.76 14.86 L3.30 15.97 L2.03 14.70 L3.14 12.24 L2.81 11.56 L2.56 10.85 L0.04 9.90 L0.04 8.10 L2.56 7.15 L2.81 6.44 L3.14 5.76 L2.03 3.30 L3.30 2.03 L5.76 3.14 L6.44 2.81Z M12.20 9.00 L12.15 9.56 L12.01 10.09 L11.77 10.60 L11.45 11.06 L11.06 11.45 L10.60 11.77 L10.09 12.01 L9.56 12.15 L9.00 12.20 L8.44 12.15 L7.91 12.01 L7.40 11.77 L6.94 11.45 L6.55 11.06 L6.23 10.60 L5.99 10.09 L5.85 9.56 L5.80 9.00 L5.85 8.44 L5.99 7.91 L6.23 7.40 L6.55 6.94 L6.94 6.55 L7.40 6.23 L7.91 5.99 L8.44 5.85 L9.00 5.80 L9.56 5.85 L10.09 5.99 L10.60 6.23 L11.06 6.55 L11.45 6.94 L11.77 7.40 L12.01 7.91 L12.15 8.44Z" fill="#4679b2"/></svg></div>
<div class="hl" style="top:998px"></div>
<div class="cb" style="left:50px;top:1016px"></div>
<div class="td" style="left:112px;top:1008px">450</div>
<div class="td" style="left:350px;top:1008px">lir</div>
<div class="td" style="left:588px;top:1008px"><a>LIR</a></div>
<div class="td" style="left:826px;top:1008px">1</div>
<div class="td" style="left:1064px;top:1008px"><a>TLR</a></div>
<div class="td" style="left:1302px;top:1008px">-</div>
<div class="td" style="left:1540px;top:1008px">-</div>
<div class="td" style="left:1776px;top:1008px">2013-08-07 08:28:57</div>
<div class="td" style="left:2012px;top:1008px">2013-08-07 08:28:57</div>
<div class="gear" style="top:1012px"><svg width="18" height="18" viewBox="0 0 18 18"><path fill-rule="evenodd" d="M7.15 2.56 L8.10 0.04 L9.90 0.04 L10.85 2.56 L11.56 2.81 L12.24 3.14 L14.70 2.03 L15.97 3.30 L14.86 5.76 L15.19 6.44 L15.44 7.15 L17.96 8.10 L17.96 9.90 L15.44 10.85 L15.19 11.56 L14.86 12.24 L15.97 14.70 L14.70 15.97 L12.24 14.86 L11.56 15.19 L10.85 15.44 L9.90 17.96 L8.10 17.96 L7.15 15.44 L6.44 15.19 L5.76 14.86 L3.30 15.97 L2.03 14.70 L3.14 12.24 L2.81 11.56 L2.56 10.85 L0.04 9.90 L0.04 8.10 L2.56 7.15 L2.81 6.44 L3.14 5.76 L2.03 3.30 L3.30 2.03 L5.76 3.14 L6.44 2.81Z M12.20 9.00 L12.15 9.56 L12.01 10.09 L11.77 10.60 L11.45 11.06 L11.06 11.45 L10.60 11.77 L10.09 12.01 L9.56 12.15 L9.00 12.20 L8.44 12.15 L7.91 12.01 L7.40 11.77 L6.94 11.45 L6.55 11.06 L6.23 10.60 L5.99 10.09 L5.85 9.56 L5.80 9.00 L5.85 8.44 L5.99 7.91 L6.23 7.40 L6.55 6.94 L6.94 6.55 L7.40 6.23 L7.91 5.99 L8.44 5.85 L9.00 5.80 L9.56 5.85 L10.09 5.99 L10.60 6.23 L11.06 6.55 L11.45 6.94 L11.77 7.40 L12.01 7.91 L12.15 8.44Z" fill="#4679b2"/></svg></div>
<div class="hl" style="top:1048px"></div>
<div class="cb" style="left:50px;top:1066px"></div>
<div class="td" style="left:112px;top:1058px">455</div>
<div class="td" style="left:350px;top:1058px">load-balancer</div>
<div class="td" style="left:588px;top:1058px"><a>Load Balancer</a></div>
<div class="td" style="left:826px;top:1058px">1</div>
<div class="td" style="left:1064px;top:1058px"><a>TLR</a></div>
<div class="td" style="left:1302px;top:1058px">-</div>
<div class="td" style="left:1540px;top:1058px">-</div>
<div class="td" style="left:1776px;top:1058px">2013-08-09 23:35:52</div>
<div class="td" style="left:2012px;top:1058px">2020-02-06 21:31:37</div>
<div class="gear" style="top:1062px"><svg width="18" height="18" viewBox="0 0 18 18"><path fill-rule="evenodd" d="M7.15 2.56 L8.10 0.04 L9.90 0.04 L10.85 2.56 L11.56 2.81 L12.24 3.14 L14.70 2.03 L15.97 3.30 L14.86 5.76 L15.19 6.44 L15.44 7.15 L17.96 8.10 L17.96 9.90 L15.44 10.85 L15.19 11.56 L14.86 12.24 L15.97 14.70 L14.70 15.97 L12.24 14.86 L11.56 15.19 L10.85 15.44 L9.90 17.96 L8.10 17.96 L7.15 15.44 L6.44 15.19 L5.76 14.86 L3.30 15.97 L2.03 14.70 L3.14 12.24 L2.81 11.56 L2.56 10.85 L0.04 9.90 L0.04 8.10 L2.56 7.15 L2.81 6.44 L3.14 5.76 L2.03 3.30 L3.30 2.03 L5.76 3.14 L6.44 2.81Z M12.20 9.00 L12.15 9.56 L12.01 10.09 L11.77 10.60 L11.45 11.06 L11.06 11.45 L10.60 11.77 L10.09 12.01 L9.56 12.15 L9.00 12.20 L8.44 12.15 L7.91 12.01 L7.40 11.77 L6.94 11.45 L6.55 11.06 L6.23 10.60 L5.99 10.09 L5.85 9.56 L5.80 9.00 L5.85 8.44 L5.99 7.91 L6.23 7.40 L6.55 6.94 L6.94 6.55 L7.40 6.23 L7.91 5.99 L8.44 5.85 L9.00 5.80 L9.56 5.85 L10.09 5.99 L10.60 6.23 L11.06 6.55 L11.45 6.94 L11.77 7.40 L12.01 7.91 L12.15 8.44Z" fill="#4679b2"/></svg></div>
<div class="hl" style="top:1098px"></div>
<div class="cb" style="left:50px;top:1116px"></div>
<div class="td" style="left:112px;top:1108px">100</div>
<div class="td" style="left:350px;top:1108px">location-2</div>
<div class="td" style="left:588px;top:1108px"><a>Location</a></div>
<div class="td" style="left:826px;top:1108px">1</div>
<div class="td" style="left:1064px;top:1108px"><a>TLR</a></div>
<div class="td" style="left:1302px;top:1108px">-</div>
<div class="td" style="left:1540px;top:1108px">-</div>
<div class="td" style="left:1776px;top:1108px">2013-08-07 08:28:48</div>
<div class="td" style="left:2012px;top:1108px">2020-02-06 21:31:37</div>
<div class="gear" style="top:1112px"><svg width="18" height="18" viewBox="0 0 18 18"><path fill-rule="evenodd" d="M7.15 2.56 L8.10 0.04 L9.90 0.04 L10.85 2.56 L11.56 2.81 L12.24 3.14 L14.70 2.03 L15.97 3.30 L14.86 5.76 L15.19 6.44 L15.44 7.15 L17.96 8.10 L17.96 9.90 L15.44 10.85 L15.19 11.56 L14.86 12.24 L15.97 14.70 L14.70 15.97 L12.24 14.86 L11.56 15.19 L10.85 15.44 L9.90 17.96 L8.10 17.96 L7.15 15.44 L6.44 15.19 L5.76 14.86 L3.30 15.97 L2.03 14.70 L3.14 12.24 L2.81 11.56 L2.56 10.85 L0.04 9.90 L0.04 8.10 L2.56 7.15 L2.81 6.44 L3.14 5.76 L2.03 3.30 L3.30 2.03 L5.76 3.14 L6.44 2.81Z M12.20 9.00 L12.15 9.56 L12.01 10.09 L11.77 10.60 L11.45 11.06 L11.06 11.45 L10.60 11.77 L10.09 12.01 L9.56 12.15 L9.00 12.20 L8.44 12.15 L7.91 12.01 L7.40 11.77 L6.94 11.45 L6.55 11.06 L6.23 10.60 L5.99 10.09 L5.85 9.56 L5.80 9.00 L5.85 8.44 L5.99 7.91 L6.23 7.40 L6.55 6.94 L6.94 6.55 L7.40 6.23 L7.91 5.99 L8.44 5.85 L9.00 5.80 L9.56 5.85 L10.09 5.99 L10.60 6.23 L11.06 6.55 L11.45 6.94 L11.77 7.40 L12.01 7.91 L12.15 8.44Z" fill="#4679b2"/></svg></div>
<div class="hl" style="top:1148px"></div>
<div class="cb" style="left:50px;top:1166px"></div>
<div class="td" style="left:112px;top:1158px">4534</div>
<div class="td" style="left:350px;top:1158px">my-custom-section</div>
<div class="td" style="left:588px;top:1158px"><a>my custom section</a></div>
<div class="td" style="left:826px;top:1158px">1</div>
<div class="td" style="left:1064px;top:1158px"><a>TLR</a></div>
<div class="td" style="left:1302px;top:1158px">4174</div>
<div class="td" style="left:1540px;top:1158px">Infrastructure</div>
<div class="td" style="left:1776px;top:1158px">2019-06-10 17:53:41</div>
<div class="td" style="left:2012px;top:1158px">2020-02-06 21:31:37</div>
<div class="gear" style="top:1162px"><svg width="18" height="18" viewBox="0 0 18 18"><path fill-rule="evenodd" d="M7.15 2.56 L8.10 0.04 L9.90 0.04 L10.85 2.56 L11.56 2.81 L12.24 3.14 L14.70 2.03 L15.97 3.30 L14.86 5.76 L15.19 6.44 L15.44 7.15 L17.96 8.10 L17.96 9.90 L15.44 10.85 L15.19 11.56 L14.86 12.24 L15.97 14.70 L14.70 15.97 L12.24 14.86 L11.56 15.19 L10.85 15.44 L9.90 17.96 L8.10 17.96 L7.15 15.44 L6.44 15.19 L5.76 14.86 L3.30 15.97 L2.03 14.70 L3.14 12.24 L2.81 11.56 L2.56 10.85 L0.04 9.90 L0.04 8.10 L2.56 7.15 L2.81 6.44 L3.14 5.76 L2.03 3.30 L3.30 2.03 L5.76 3.14 L6.44 2.81Z M12.20 9.00 L12.15 9.56 L12.01 10.09 L11.77 10.60 L11.45 11.06 L11.06 11.45 L10.60 11.77 L10.09 12.01 L9.56 12.15 L9.00 12.20 L8.44 12.15 L7.91 12.01 L7.40 11.77 L6.94 11.45 L6.55 11.06 L6.23 10.60 L5.99 10.09 L5.85 9.56 L5.80 9.00 L5.85 8.44 L5.99 7.91 L6.23 7.40 L6.55 6.94 L6.94 6.55 L7.40 6.23 L7.91 5.99 L8.44 5.85 L9.00 5.80 L9.56 5.85 L10.09 5.99 L10.60 6.23 L11.06 6.55 L11.45 6.94 L11.77 7.40 L12.01 7.91 L12.15 8.44Z" fill="#4679b2"/></svg></div>
<div class="hl" style="top:1198px"></div>
<div class="cb" style="left:50px;top:1216px"></div>
<div class="td" style="left:112px;top:1208px">95</div>
<div class="td" style="left:350px;top:1208px">physical-interface</div>
<div class="td" style="left:588px;top:1208px"><a>Physical Interface</a></div>
<div class="td" style="left:826px;top:1208px">1</div>
<div class="td" style="left:1064px;top:1208px"><a>TLR</a></div>
<div class="td" style="left:1302px;top:1208px">-</div>
<div class="td" style="left:1540px;top:1208px">-</div>
<div class="td" style="left:1776px;top:1208px">2013-08-07 08:28:48</div>
<div class="td" style="left:2012px;top:1208px">2020-02-06 21:31:37</div>
<div class="gear" style="top:1212px"><svg width="18" height="18" viewBox="0 0 18 18"><path fill-rule="evenodd" d="M7.15 2.56 L8.10 0.04 L9.90 0.04 L10.85 2.56 L11.56 2.81 L12.24 3.14 L14.70 2.03 L15.97 3.30 L14.86 5.76 L15.19 6.44 L15.44 7.15 L17.96 8.10 L17.96 9.90 L15.44 10.85 L15.19 11.56 L14.86 12.24 L15.97 14.70 L14.70 15.97 L12.24 14.86 L11.56 15.19 L10.85 15.44 L9.90 17.96 L8.10 17.96 L7.15 15.44 L6.44 15.19 L5.76 14.86 L3.30 15.97 L2.03 14.70 L3.14 12.24 L2.81 11.56 L2.56 10.85 L0.04 9.90 L0.04 8.10 L2.56 7.15 L2.81 6.44 L3.14 5.76 L2.03 3.30 L3.30 2.03 L5.76 3.14 L6.44 2.81Z M12.20 9.00 L12.15 9.56 L12.01 10.09 L11.77 10.60 L11.45 11.06 L11.06 11.45 L10.60 11.77 L10.09 12.01 L9.56 12.15 L9.00 12.20 L8.44 12.15 L7.91 12.01 L7.40 11.77 L6.94 11.45 L6.55 11.06 L6.23 10.60 L5.99 10.09 L5.85 9.56 L5.80 9.00 L5.85 8.44 L5.99 7.91 L6.23 7.40 L6.55 6.94 L6.94 6.55 L7.40 6.23 L7.91 5.99 L8.44 5.85 L9.00 5.80 L9.56 5.85 L10.09 5.99 L10.60 6.23 L11.06 6.55 L11.45 6.94 L11.77 7.40 L12.01 7.91 L12.15 8.44Z" fill="#4679b2"/></svg></div>
<div class="hl" style="top:1248px"></div>
<div class="cb" style="left:50px;top:1266px"></div>
<div class="td" style="left:112px;top:1258px">3672</div>
<div class="td" style="left:350px;top:1258px">private-peering</div>
<div class="td" style="left:588px;top:1258px"><a>Private Peering</a></div>
<div class="td" style="left:826px;top:1258px">1</div>
<div class="td" style="left:1064px;top:1258px"><a>TLR</a></div>
<div class="td" style="left:1302px;top:1258px">-</div>
<div class="td" style="left:1540px;top:1258px">-</div>
<div class="td" style="left:1776px;top:1258px">2016-06-09 23:23:42</div>
<div class="td" style="left:2012px;top:1258px">2020-02-06 21:31:37</div>
<div class="gear" style="top:1262px"><svg width="18" height="18" viewBox="0 0 18 18"><path fill-rule="evenodd" d="M7.15 2.56 L8.10 0.04 L9.90 0.04 L10.85 2.56 L11.56 2.81 L12.24 3.14 L14.70 2.03 L15.97 3.30 L14.86 5.76 L15.19 6.44 L15.44 7.15 L17.96 8.10 L17.96 9.90 L15.44 10.85 L15.19 11.56 L14.86 12.24 L15.97 14.70 L14.70 15.97 L12.24 14.86 L11.56 15.19 L10.85 15.44 L9.90 17.96 L8.10 17.96 L7.15 15.44 L6.44 15.19 L5.76 14.86 L3.30 15.97 L2.03 14.70 L3.14 12.24 L2.81 11.56 L2.56 10.85 L0.04 9.90 L0.04 8.10 L2.56 7.15 L2.81 6.44 L3.14 5.76 L2.03 3.30 L3.30 2.03 L5.76 3.14 L6.44 2.81Z M12.20 9.00 L12.15 9.56 L12.01 10.09 L11.77 10.60 L11.45 11.06 L11.06 11.45 L10.60 11.77 L10.09 12.01 L9.56 12.15 L9.00 12.20 L8.44 12.15 L7.91 12.01 L7.40 11.77 L6.94 11.45 L6.55 11.06 L6.23 10.60 L5.99 10.09 L5.85 9.56 L5.80 9.00 L5.85 8.44 L5.99 7.91 L6.23 7.40 L6.55 6.94 L6.94 6.55 L7.40 6.23 L7.91 5.99 L8.44 5.85 L9.00 5.80 L9.56 5.85 L10.09 5.99 L10.60 6.23 L11.06 6.55 L11.45 6.94 L11.77 7.40 L12.01 7.91 L12.15 8.44Z" fill="#4679b2"/></svg></div>
<div class="hl" style="top:1298px"></div>
<div class="cb" style="left:50px;top:1316px"></div>
<div class="td" style="left:112px;top:1308px">97</div>
<div class="td" style="left:350px;top:1308px">rack</div>
<div class="td" style="left:588px;top:1308px"><a>Rack</a></div>
<div class="td" style="left:826px;top:1308px">1</div>
<div class="td" style="left:1064px;top:1308px"><a>TLR</a></div>
<div class="td" style="left:1302px;top:1308px">-</div>
<div class="td" style="left:1540px;top:1308px">-</div>
<div class="td" style="left:1776px;top:1308px">2013-08-07 08:28:48</div>
<div class="td" style="left:2012px;top:1308px">2020-02-06 21:31:37</div>
<div class="gear" style="top:1312px"><svg width="18" height="18" viewBox="0 0 18 18"><path fill-rule="evenodd" d="M7.15 2.56 L8.10 0.04 L9.90 0.04 L10.85 2.56 L11.56 2.81 L12.24 3.14 L14.70 2.03 L15.97 3.30 L14.86 5.76 L15.19 6.44 L15.44 7.15 L17.96 8.10 L17.96 9.90 L15.44 10.85 L15.19 11.56 L14.86 12.24 L15.97 14.70 L14.70 15.97 L12.24 14.86 L11.56 15.19 L10.85 15.44 L9.90 17.96 L8.10 17.96 L7.15 15.44 L6.44 15.19 L5.76 14.86 L3.30 15.97 L2.03 14.70 L3.14 12.24 L2.81 11.56 L2.56 10.85 L0.04 9.90 L0.04 8.10 L2.56 7.15 L2.81 6.44 L3.14 5.76 L2.03 3.30 L3.30 2.03 L5.76 3.14 L6.44 2.81Z M12.20 9.00 L12.15 9.56 L12.01 10.09 L11.77 10.60 L11.45 11.06 L11.06 11.45 L10.60 11.77 L10.09 12.01 L9.56 12.15 L9.00 12.20 L8.44 12.15 L7.91 12.01 L7.40 11.77 L6.94 11.45 L6.55 11.06 L6.23 10.60 L5.99 10.09 L5.85 9.56 L5.80 9.00 L5.85 8.44 L5.99 7.91 L6.23 7.40 L6.55 6.94 L6.94 6.55 L7.40 6.23 L7.91 5.99 L8.44 5.85 L9.00 5.80 L9.56 5.85 L10.09 5.99 L10.60 6.23 L11.06 6.55 L11.45 6.94 L11.77 7.40 L12.01 7.91 L12.15 8.44Z" fill="#4679b2"/></svg></div>
<div class="hl" style="top:1348px"></div>
<div class="cb" style="left:50px;top:1366px"></div>
<div class="td" style="left:112px;top:1358px">102</div>
<div class="td" style="left:350px;top:1358px">resource-holder</div>
<div class="td" style="left:588px;top:1358px"><a>Resource Holder</a></div>
<div class="td" style="left:826px;top:1358px">1</div>
<div class="td" style="left:1064px;top:1358px"><a>TLR</a></div>
<div class="td" style="left:1302px;top:1358px">-</div>
<div class="td" style="left:1540px;top:1358px">-</div>
<div class="td" style="left:1776px;top:1358px">2013-08-07 08:28:48</div>
<div class="td" style="left:2012px;top:1358px">2020-02-06 21:31:37</div>
<div class="gear" style="top:1362px"><svg width="18" height="18" viewBox="0 0 18 18"><path fill-rule="evenodd" d="M7.15 2.56 L8.10 0.04 L9.90 0.04 L10.85 2.56 L11.56 2.81 L12.24 3.14 L14.70 2.03 L15.97 3.30 L14.86 5.76 L15.19 6.44 L15.44 7.15 L17.96 8.10 L17.96 9.90 L15.44 10.85 L15.19 11.56 L14.86 12.24 L15.97 14.70 L14.70 15.97 L12.24 14.86 L11.56 15.19 L10.85 15.44 L9.90 17.96 L8.10 17.96 L7.15 15.44 L6.44 15.19 L5.76 14.86 L3.30 15.97 L2.03 14.70 L3.14 12.24 L2.81 11.56 L2.56 10.85 L0.04 9.90 L0.04 8.10 L2.56 7.15 L2.81 6.44 L3.14 5.76 L2.03 3.30 L3.30 2.03 L5.76 3.14 L6.44 2.81Z M12.20 9.00 L12.15 9.56 L12.01 10.09 L11.77 10.60 L11.45 11.06 L11.06 11.45 L10.60 11.77 L10.09 12.01 L9.56 12.15 L9.00 12.20 L8.44 12.15 L7.91 12.01 L7.40 11.77 L6.94 11.45 L6.55 11.06 L6.23 10.60 L5.99 10.09 L5.85 9.56 L5.80 9.00 L5.85 8.44 L5.99 7.91 L6.23 7.40 L6.55 6.94 L6.94 6.55 L7.40 6.23 L7.91 5.99 L8.44 5.85 L9.00 5.80 L9.56 5.85 L10.09 5.99 L10.60 6.23 L11.06 6.55 L11.45 6.94 L11.77 7.40 L12.01 7.91 L12.15 8.44Z" fill="#4679b2"/></svg></div>
<div class="hl" style="top:1398px"></div>
</body></html>
